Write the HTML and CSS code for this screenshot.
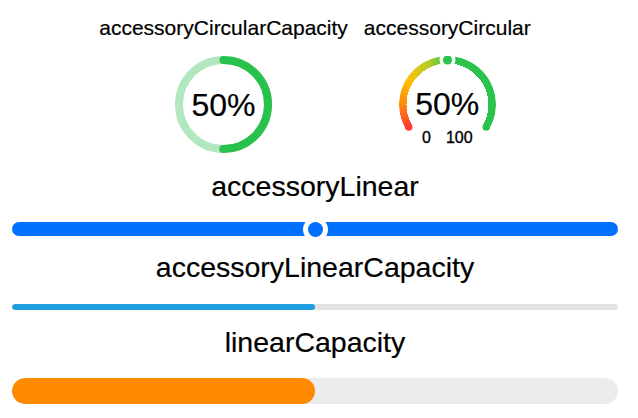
FILE: index.html
```html
<!DOCTYPE html>
<html>
<head>
<meta charset="utf-8">
<link rel="stylesheet" href="styles.css">
</head>
<body>
<div class="page">
  <div class="top">
    <div class="col">
      <div class="small-label">accessoryCircularCapacity</div>
      <div class="dial">
        <svg class="ring" viewBox="0 0 97 97" width="97" height="97">
          <circle cx="48.5" cy="48.5" r="44.5" fill="none" stroke="#b2e7bf" stroke-width="8"/>
          <circle cx="48.5" cy="48.5" r="44.5" fill="none" stroke="#28c14c" stroke-width="8" stroke-linecap="round" stroke-dasharray="139.8 400" transform="rotate(-90 48.5 48.5)"/>
        </svg>
        <div class="dial-text">
          <span class="pct">50%</span>
        </div>
      </div>
    </div>
    <div class="col col-right">
      <div class="small-label">accessoryCircular</div>
      <div class="dial">
        <div class="arc"></div>
        <svg class="ring" viewBox="0 0 97 97" width="97" height="97">
          <circle cx="9.75" cy="70.9" r="3.75" fill="#ff3b30"/>
          <circle cx="87.25" cy="70.9" r="3.75" fill="#2ac34e"/>
          <circle cx="48.5" cy="3.9" r="8" fill="#fff"/>
          <circle cx="48.5" cy="3.9" r="4.6" fill="#2ac34e"/>
        </svg>
        <div class="dial-text gauge-text">
          <span class="pct">50%</span>
          <div class="range"><span>0</span><span>100</span></div>
        </div>
      </div>
    </div>
  </div>

  <div class="title">accessoryLinear</div>
  <div class="bar bar-blue">
    <span class="knob" style="left: 50%"></span>
  </div>

  <div class="title">accessoryLinearCapacity</div>
  <div class="bar bar-thin">
    <div class="fill fill-cyan" style="width: 50%"></div>
  </div>

  <div class="title">linearCapacity</div>
  <div class="bar bar-thick">
    <div class="fill fill-orange" style="width: 50%"></div>
  </div>
</div>
</body>
</html>
```

FILE: styles.css
```css
* { box-sizing: border-box; }
html, body {
  margin: 0;
  padding: 0;
  background: #ffffff;
}
body {
  font-family: "Liberation Sans", Arial, sans-serif;
  color: #000;
}
.page {
  display: flex;
  flex-direction: column;
  padding: 0 20px 0 12px;
}
.top {
  display: flex;
  justify-content: center;
  gap: 16px;
  margin-top: 16px;
}
.col {
  display: flex;
  flex-direction: column;
  align-items: center;
}
.small-label {
  font-size: 21px;
  line-height: 24px;
  white-space: nowrap;
  -webkit-text-stroke: 0.2px #000;
}
.dial {
  position: relative;
  width: 97px;
  height: 97px;
  margin-top: 16px;
}
.ring {
  position: absolute;
  left: 0;
  top: 0;
  display: block;
}
.arc {
  position: absolute;
  inset: 0;
  border-radius: 50%;
  background: conic-gradient(from 240deg,
    #ff3b30 0deg,
    #ff8a10 30deg,
    #ffc107 62deg,
    #b4cc2a 95deg,
    #2ac34e 122deg,
    #2ac34e 240deg,
    transparent 240deg);
  -webkit-mask: radial-gradient(circle closest-side, transparent calc(100% - 7.5px), #000 calc(100% - 7.5px));
  mask: radial-gradient(circle closest-side, transparent calc(100% - 7.5px), #000 calc(100% - 7.5px));
}
.dial-text {
  position: absolute;
  inset: 0;
  display: flex;
  flex-direction: column;
  align-items: center;
  justify-content: center;
}
.pct {
  font-size: 32px;
  line-height: 36px;
  -webkit-text-stroke: 0.2px #000;
}
.gauge-text {
  justify-content: flex-start;
  padding-top: 30px;
}
.range {
  display: flex;
  gap: 15px;
  font-size: 16px;
  line-height: 18px;
  margin-top: 7px;
  margin-left: 0;
  -webkit-text-stroke: 0.35px #000;
}
.title {
  text-align: center;
  font-size: 28.5px;
  line-height: 32px;
  margin-top: 17px;
  -webkit-text-stroke: 0.2px #000;
}
.bar {
  position: relative;
  width: 100%;
  border-radius: 999px;
  overflow: visible;
}
.bar-blue {
  height: 14px;
  background: #0070ff;
  margin-top: 20px;
}
.knob {
  position: absolute;
  top: 50%;
  width: 15px;
  height: 15px;
  margin-left: -7.5px;
  margin-top: -7.5px;
  border-radius: 50%;
  background: #0070ff;
  box-shadow: 0 0 0 5px #fff;
}
.bar-thin {
  height: 6px;
  background: #e2e2e2;
  margin-top: 21px;
  overflow: hidden;
}
.bar-thick {
  height: 26px;
  background: #ececec;
  margin-top: 20px;
  overflow: hidden;
}
.fill {
  height: 100%;
  border-radius: 999px;
}
.fill-cyan { background: #1fa0e2; }
.fill-orange { background: #ff8a00; }
.bar-blue + .title { margin-top: 15px; }
.bar-thin + .title { margin-top: 16px; }
```
